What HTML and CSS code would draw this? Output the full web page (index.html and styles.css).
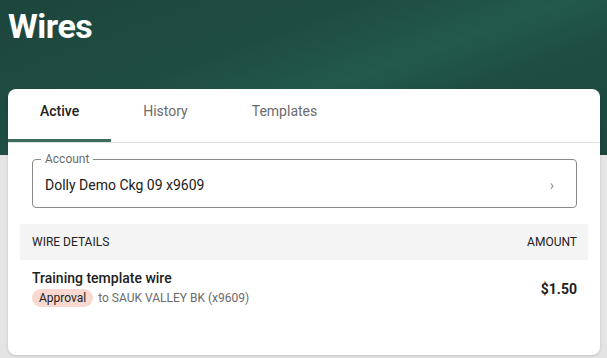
FILE: index.html
```html
<!DOCTYPE html>
<html lang="en">
<head>
    <meta charset="UTF-8">
    <meta name="viewport" content="width=device-width, initial-scale=1.0">
    <title>Wires</title>
    <link rel="stylesheet" href="styles.css">
</head>
<body>
    <div class="hero">
        <h1>Wires</h1>
    </div>

    <div class="card">
        <div class="tabs">
            <div class="tab active">Active</div>
            <div class="tab">History</div>
            <div class="tab">Templates</div>
        </div>

        <div class="card-body">
            <div class="field">
                <span class="field-label">Account</span>
                <span class="field-value">Dolly Demo Ckg 09 x9609</span>
                <span class="chevron">&rsaquo;</span>
            </div>

            <div class="table-head">
                <span>WIRE DETAILS</span>
                <span>AMOUNT</span>
            </div>

            <div class="wire-row">
                <div class="wire-info">
                    <div class="wire-name">Training template wire</div>
                    <div class="wire-meta">
                        <span class="badge">Approval</span>
                        <span class="wire-to">to SAUK VALLEY BK (x9609)</span>
                    </div>
                </div>
                <div class="wire-amount">$1.50</div>
            </div>
        </div>
    </div>
</body>
</html>
```

FILE: styles.css
```css
/* Reset */
* {
    margin: 0;
    padding: 0;
    box-sizing: border-box;
    font-family: Roboto, "Liberation Sans", sans-serif;
}

:root {
    --green: #1e4a40;
    --green-accent: #3d6b5a;
    --text: #212121;
    --muted: #6b6b6b;
    --page-bg: #e4e4e4;
}

body {
    background-color: var(--page-bg);
    color: var(--text);
    height: 358px;
    overflow: hidden;
}

/* Header */
.hero {
    height: 155px;
    padding: 7px 8px 0;
    background: linear-gradient(160deg, #1d463d 0%, #1f4c42 35%, #22594c 55%, #1e4d42 70%, #1c473d 100%);
}

.hero h1 {
    color: #ffffff;
    font-size: 34px;
    font-weight: 700;
    line-height: 38px;
    letter-spacing: -0.5px;
}

/* Card */
.card {
    margin: -66px 7px 0 8px;
    height: 266px;
    background-color: #ffffff;
    border-radius: 8px;
    box-shadow: 0 1px 3px rgba(0, 0, 0, 0.15);
    overflow: hidden;
}

.tabs {
    display: flex;
    height: 54px;
    border-bottom: 1px solid #e2e2e2;
}

.tab {
    display: flex;
    align-items: center;
    padding: 0 32px 6px;
    font-size: 14px;
    color: var(--muted);
    border-bottom: 3px solid transparent;
}

.tab.active {
    font-weight: 500;
    color: var(--text);
    border-bottom-color: var(--green-accent);
}

.card-body {
    padding: 16px 12px 0;
}

/* Outlined field */
.field {
    position: relative;
    display: flex;
    align-items: center;
    justify-content: space-between;
    height: 49px;
    margin: 0 11px 16px 12px;
    padding: 2px 22px 0 12px;
    border: 1px solid #8a8a8a;
    border-radius: 4px;
}

.field-label {
    position: absolute;
    top: -8px;
    left: 8px;
    padding: 0 4px;
    background-color: #ffffff;
    font-size: 12px;
    color: var(--muted);
}

.field-value {
    font-size: 14px;
    color: var(--text);
}

.chevron {
    font-size: 14px;
    color: #8a8a8a;
}

/* Table */
.table-head {
    display: flex;
    justify-content: space-between;
    align-items: center;
    height: 36px;
    padding: 0 11px 0 12px;
    background-color: #f4f4f4;
    font-size: 12px;
    color: var(--text);
}

.wire-row {
    display: flex;
    justify-content: space-between;
    align-items: center;
    padding: 10px 11px 0 12px;
}

.wire-name {
    font-size: 14px;
    font-weight: 500;
    margin-bottom: 3px;
}

.wire-meta {
    display: flex;
    align-items: center;
    gap: 5px;
}

.badge {
    display: inline-block;
    padding: 2px 7px;
    border-radius: 9px;
    background-color: #f8d8cf;
    font-size: 12px;
    color: var(--text);
}

.wire-to {
    font-size: 12px;
    color: var(--muted);
}

.wire-amount {
    font-size: 14px;
    font-weight: 700;
}
```
